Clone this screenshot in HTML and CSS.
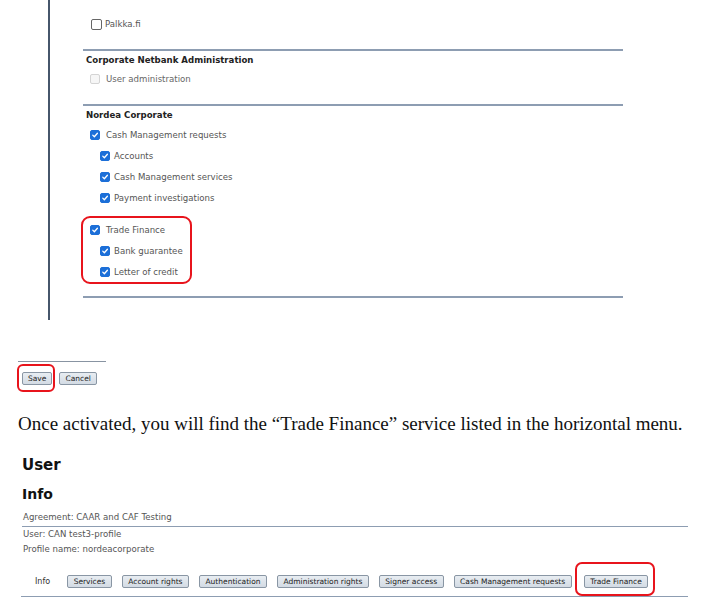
FILE: index.html
```html
<!DOCTYPE html>
<html lang="en">
<head>
<meta charset="utf-8">
<title>Trade Finance activation</title>
<link rel="stylesheet" href="styles.css">
</head>
<body>
<div class="panel">
  <div class="inner">
    <div class="group group-first">
      <label class="row row-palkka"><input type="checkbox" class="cb"><span>Palkka.fi</span></label>
    </div>
    <div class="group group-admin">
      <div class="group-title">Corporate Netbank Administration</div>
      <label class="row row-top"><input type="checkbox" class="cb" disabled><span class="txt-disabled">User administration</span></label>
    </div>
    <div class="group group-nordea">
      <div class="group-title">Nordea Corporate</div>
      <label class="row row-top row-first"><input type="checkbox" class="cb" checked><span>Cash Management requests</span></label>
      <label class="row row-sub"><input type="checkbox" class="cb" checked><span>Accounts</span></label>
      <label class="row row-sub"><input type="checkbox" class="cb" checked><span>Cash Management services</span></label>
      <label class="row row-sub"><input type="checkbox" class="cb" checked><span>Payment investigations</span></label>
      <div class="highlight highlight-tf">
        <label class="row row-top"><input type="checkbox" class="cb" checked><span>Trade Finance</span></label>
        <label class="row row-sub"><input type="checkbox" class="cb" checked><span>Bank guarantee</span></label>
        <label class="row row-sub"><input type="checkbox" class="cb" checked><span>Letter of credit</span></label>
      </div>
    </div>
  </div>
</div>

<div class="actions">
  <div class="highlight highlight-save"><button class="btn" type="button">Save</button></div>
  <button class="btn btn-cancel" type="button">Cancel</button>
</div>

<p class="doc-text">Once activated, you will find the “Trade Finance” service listed in the horizontal menu.</p>

<h1 class="page-title">User</h1>
<h2 class="sub-title">Info</h2>
<div class="info">
  <div class="info-row info-agreement">Agreement: CAAR and CAF Testing</div>
  <div class="info-row">User: CAN test3-profile</div>
  <div class="info-row">Profile name: nordeacorporate</div>
</div>

<nav class="tabs">
  <span class="tab-current">Info</span>
  <button class="btn tab" type="button">Services</button>
  <button class="btn tab" type="button">Account rights</button>
  <button class="btn tab" type="button">Authentication</button>
  <button class="btn tab" type="button">Administration rights</button>
  <button class="btn tab" type="button">Signer access</button>
  <button class="btn tab" type="button">Cash Management requests</button>
  <div class="highlight highlight-tab"><button class="btn tab" type="button">Trade Finance</button></div>
</nav>
</body>
</html>
```
FILE: styles.css
```css
* { box-sizing: border-box; }
body {
  margin: 0;
  font-family: "DejaVu Sans", Verdana, sans-serif;
  color: #444;
  background: #fff;
}

/* ---------- top panel ---------- */
.panel {
  margin-left: 48px;
  border-left: 2px solid #46566b;
  height: 320px;
  padding-left: 33px;
}
.inner { width: 540px; }
.group { border-bottom: 2px solid #8d9db2; }
.group-first { padding-top: 14px; padding-bottom: 15px; }
.group-admin { padding-bottom: 15px; }
.group-nordea { padding-bottom: 12px; }

.group-title {
  height: 16px;
  line-height: 16px;
  font-size: 8.6px;
  font-weight: bold;
  color: #222;
  padding-left: 3px;
  margin-top: 1px;
}
.row {
  display: flex;
  align-items: center;
  height: 21px;
  font-size: 8.6px;
  color: #555;
  padding-left: 7px;
  gap: 6px;
}
.row-palkka { height: 20px; padding-left: 8px; gap: 3px; }
.row-first { margin-top: 1px; }
.row-sub { padding-left: 17px; gap: 4px; }
.txt-disabled { color: #666; }

.cb {
  appearance: none;
  -webkit-appearance: none;
  margin: 0;
  width: 10px;
  height: 10px;
  border: 1px solid #666;
  border-radius: 2px;
  background: #fff;
  flex: none;
}
.row-palkka .cb { width: 11px; height: 11px; }
.cb:disabled { border-color: #d4d4d4; background: #f6f6f6; }
.cb:checked {
  border-color: #1c6fd8;
  background: #1c6fd8 url("data:image/svg+xml,%3Csvg xmlns='http://www.w3.org/2000/svg' viewBox='0 0 10 10'%3E%3Cpath d='M2.2 5.2 L4.2 7.2 L8 2.8' fill='none' stroke='white' stroke-width='1.6' stroke-linecap='round' stroke-linejoin='round'/%3E%3C/svg%3E") center / 100% no-repeat;
}

.highlight {
  border: 2px solid #e8141c;
  border-radius: 9px;
}
.highlight-tf {
  width: 111px;
  margin-left: -2px;
  margin-top: 8px;
  padding-top: 1px;
}
.highlight-tf .row { padding-left: 7px; }
.highlight-tf .row-sub { padding-left: 17px; }

/* ---------- save / cancel ---------- */
.actions {
  margin: 43px 0 0 17px;
  display: flex;
  align-items: flex-start;
  gap: 4px;
  position: relative;
}
.actions::before {
  content: "";
  position: absolute;
  left: 1px;
  top: -2px;
  width: 88px;
  border-top: 1px solid #8894a2;
}
.highlight-save {
  display: flex;
  align-items: flex-start;
  border-radius: 6px;
  padding: 6px 1px 5px 3px;
  margin-top: 1px;
}
.btn-cancel { margin-top: 9px; }

.btn {
  font-family: "DejaVu Sans", Verdana, sans-serif;
  font-size: 7.5px;
  color: #222;
  height: 13px;
  line-height: 11px;
  padding: 0 5px;
  background: linear-gradient(#e8edf2, #d3dbe4);
  border: 1px solid #8996a4;
  border-radius: 2px;
  white-space: nowrap;
}

/* ---------- doc text ---------- */
.doc-text {
  margin: 21px 0 0 18px;
  font-family: "Liberation Serif", "Times New Roman", serif;
  font-size: 19px;
  line-height: 22px;
  color: #111;
}

/* ---------- user info ---------- */
.page-title {
  margin: 21px 0 0 22px;
  font-size: 15px;
  line-height: 18px;
  font-weight: bold;
  color: #111;
}
.sub-title {
  margin: 11px 0 0 22px;
  font-size: 14px;
  line-height: 18px;
  font-weight: bold;
  color: #111;
}
.info {
  margin: 7px 0 0 22px;
  width: 666px;
  font-size: 8.6px;
  color: #555;
}
.info-row { line-height: 15px; padding-left: 1px; }
.info-agreement { border-bottom: 1px solid #8d9db2; padding-bottom: 1px; }

/* ---------- tabs ---------- */
.tabs {
  margin: 5px 0 0 21px;
  width: 667px;
  display: flex;
  align-items: flex-start;
  border-bottom: 1px solid #8d9db2;
  height: 35px;
}
.tab-current {
  font-size: 8px;
  color: #333;
  margin: 13px 17px 0 14px;
  line-height: 13px;
}
.tab { margin: 13px 10px 0 0; padding: 0 5.5px; }
.highlight-tab {
  display: flex;
  align-items: flex-start;
  border-radius: 7px;
  padding: 11px 5px 0 7px;
  height: 34px;
  margin-left: -7px;
}
.highlight-tab .tab { margin: 0; }
```
